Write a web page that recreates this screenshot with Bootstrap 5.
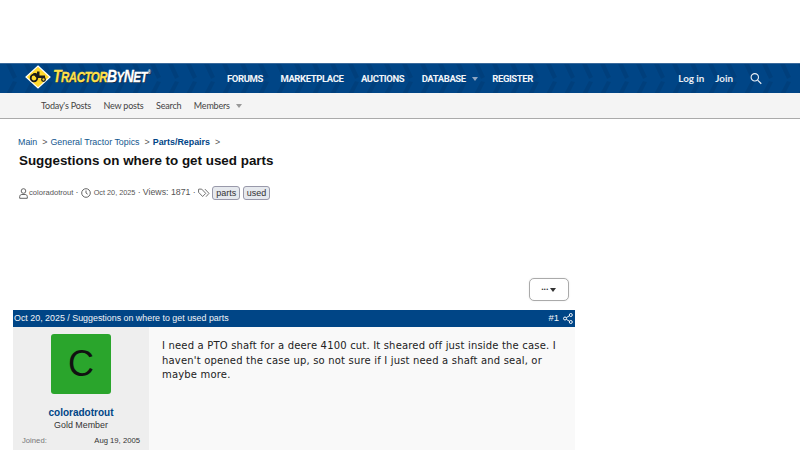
<!DOCTYPE html>
<html lang="en">
<head>
    <meta charset="UTF-8">
    <meta name="viewport" content="width=device-width, initial-scale=1.0">
    <title>Suggestions on where to get used parts</title>
    <link href="https://cdn.jsdelivr.net/npm/bootstrap@5.3.3/dist/css/bootstrap.min.css" rel="stylesheet">
    <script src="https://cdn.jsdelivr.net/npm/bootstrap@5.3.3/dist/js/bootstrap.bundle.min.js"></script>
    <style>
        html, body {
            height: 450px;
            overflow: hidden;
        }
        body {
            background: #fff;
            color: #141414;
            font-family: "Liberation Sans", Arial, sans-serif;
            font-size: 12px;
        }
        .ad-top {
            height: 63px;
        }
        .site-head {
            height: 30px;
            background-color: #004586;
            background-image: url("data:image/svg+xml,%3Csvg xmlns='http://www.w3.org/2000/svg' width='18' height='30'%3E%3Cpath d='M6 0h5l6 13-4 2zM13 17l4 1-6 12H6z' fill='%23003f7c'/%3E%3C/svg%3E");
            border-top: 1px solid #3a6a9c;
        }
        .logo-box {
            margin-left: 25px;
            width: 202px;
            padding-bottom: 4px;
        }
        .logo-text {
            display: inline-block;
            font-weight: 700;
            font-style: italic;
            font-size: 17px;
            letter-spacing: -.6px;
            color: #ffe14a;
            line-height: 1;
            text-shadow: 1px 1px 0 #10253f;
            white-space: nowrap;
            transform: scaleX(.82);
            transform-origin: left center;
            -webkit-text-stroke: .3px currentColor;
        }
        .logo-text small {
            font-size: 14px;
        }
        .logo-text .logo-white {
            color: #fff;
        }
        .logo-text sup {
            font-size: 5px;
            color: #fff;
            top: -1.6em;
            margin-left: 1px;
            -webkit-text-stroke: 0;
        }
        .logo-ico {
            margin-right: 2px;
        }
        .main-link {
            font-family: "Roboto", sans-serif;
            font-weight: 700;
            font-size: 9.5px;
            letter-spacing: -.4px;
            color: #f2f5f9;
            text-decoration: none;
            white-space: nowrap;
        }
        .main-gap {
            gap: 17.5px;
            padding-top: 1px;
        }
        .caret-down {
            display: inline-block;
            width: 0;
            height: 0;
            border-left: 3.5px solid transparent;
            border-right: 3.5px solid transparent;
            border-top: 4px solid #8fa6c2;
        }
        .main-gap .caret-down {
            margin-left: 6px;
            margin-right: -3px;
        }
        .right-link {
            font-family: "Lato", sans-serif;
            font-size: 9.8px;
            font-weight: 700;
            color: #e8eef5;
            text-decoration: none;
        }
        .join-link {
            margin-left: 11px;
        }
        .search-ico {
            margin: 0 38px 0 17px;
        }
        .sub-head {
            height: 26px;
            background: #f4f4f4;
            border-bottom: 1px solid #aaa;
            padding-left: 41px;
            gap: 12.5px;
        }
        .sub-link {
            font-family: "Lato", sans-serif;
            font-size: 9px;
            letter-spacing: -.2px;
            color: #444;
            text-decoration: none;
        }
        .sub-head .caret-down {
            border-top-color: #999;
            margin-left: 6px;
        }
        .crumbs {
            margin: 16px 0 0 18px;
            height: 14px;
            font-size: 8.9px;
            line-height: 14px;
        }
        .crumbs a {
            color: #14588f;
            text-decoration: none;
        }
        .crumbs a.fw-bold {
            color: #004586;
        }
        .crumbs .crumb-sep {
            color: #555;
            margin: 0 3px 0 5px;
        }
        .thread-title {
            margin: 2px 0 0 19px;
            font-size: 13.4px;
            font-weight: 700;
            line-height: 20px;
            color: #111;
        }
        .thread-meta {
            margin: 14px 0 0 19px;
            height: 16px;
            font-size: 8.8px;
            color: #555;
        }
        .meta-tiny {
            font-size: 7.6px;
            margin-left: 1px;
        }
        .meta-date {
            font-size: 7.3px;
            margin-left: 3px;
        }
        .meta-dot {
            margin: 0 2.200px;
        }
        .tag-pill {
            background: #e6e9ee;
            border: 1px solid #99a;
            border-radius: 3px;
            padding: 0 3px;
            font-size: 9px;
            line-height: 12px;
            color: #333;
            margin-left: 2.500px;
        }
        .post-wrap {
            width: 562px;
            margin-left: 13px;
        }
        .tools-row {
            margin-top: 77px;
            height: 32px;
        }
        .tools-btn {
            width: 40px;
            height: 23px;
            border: 1px solid #aaa;
            border-radius: 5px;
            background: #fff;
            padding: 0;
            margin-right: 6px;
            box-shadow: 0 0 2px rgba(0, 0, 0, .1);
        }
        .tools-btn .caret-down {
            border-top-color: #333;
            margin-left: 2px;
        }
        .tools-dots {
            font-size: 5.5px;
            color: #333;
            letter-spacing: .4px;
        }
        .post-bar {
            height: 17px;
            background: #004586;
            color: #f0f4f8;
            font-size: 8.9px;
            padding: 0 1px;
        }
        .post-bar-num {
            font-size: 9.5px;
        }
        .share-ico {
            margin: 0 1px 0 4px;
        }
        .post-body {
            height: 123px;
        }
        .user-cell {
            width: 136px;
            background: #eee;
        }
        .user-pic {
            width: 60px;
            height: 60px;
            margin: 7px auto 0;
            background: #2aa52c;
            border-radius: 3px;
            font-size: 36px;
            line-height: 1;
            color: #111;
        }
        .user-name {
            margin-top: 12px;
            font-size: 10px;
            font-weight: 700;
            line-height: 13px;
            color: #004586;
        }
        .user-role {
            font-size: 8.9px;
            line-height: 13px;
            color: #333;
        }
        .user-stat {
            font-size: 7.7px;
            margin: 3px 9px 0;
            color: #333;
        }
        .user-stat span:first-child {
            color: #777;
        }
        .post-text {
            background: #f9f9f9;
            padding: 12px 13px;
            font-family: "DejaVu Sans", sans-serif;
            font-size: 10px;
            letter-spacing: .18px;
            line-height: 14.5px;
            color: #222;
        }
    </style>
</head>
<body>

<div class="ad-top"></div>

<!-- Main nav -->
<nav class="site-head d-flex align-items-center">
    <div class="logo-box d-flex align-items-center flex-shrink-0">
        <svg width="26" height="24" viewBox="0 0 26 24" class="flex-shrink-0 logo-ico">
            <path d="M13 1l12 11-12 11L1 12z" fill="#ffd92e" stroke="#fff" stroke-width="1.2"/>
            <circle cx="9" cy="13" r="3.300" fill="none" stroke="#1c1c1c" stroke-width="1.800"/>
            <circle cx="18.500" cy="14.500" r="1.800" fill="none" stroke="#1c1c1c" stroke-width="1.300"/>
            <path d="M8 8h3.500l1 2.500H20v2.500h-7.500l-2-1zM12 6.500h2.500V11H12z" fill="#1c1c1c"/>
        </svg>
        <span class="logo-text"><span>T</span><small>RACTOR</small><span class="logo-white">B</span><small class="logo-white">Y</small><span class="logo-white">N</span><small class="logo-white">ET</small><sup>®</sup></span>
    </div>
    <div class="d-flex align-items-center main-gap">
        <a class="main-link" href="#">FORUMS</a>
        <a class="main-link" href="#">MARKETPLACE</a>
        <a class="main-link" href="#">AUCTIONS</a>
        <span class="d-flex align-items-center">
            <a class="main-link" href="#">DATABASE</a>
            <span class="caret-down"></span>
        </span>
        <a class="main-link" href="#">REGISTER</a>
    </div>
    <div class="d-flex align-items-center ms-auto">
        <a class="right-link" href="#">Log in</a>
        <a class="right-link join-link" href="#">Join</a>
        <svg width="12" height="13" viewBox="0 0 13 13" class="search-ico">
            <circle cx="5.200" cy="5.200" r="4" fill="none" stroke="#e8eef5" stroke-width="1.200"/>
            <path d="M8.200 8.200l4 4" stroke="#e8eef5" stroke-width="1.300"/>
        </svg>
    </div>
</nav>

<!-- Sub nav -->
<div class="sub-head d-flex align-items-center">
    <a class="sub-link" href="#">Today's Posts</a>
    <a class="sub-link" href="#">New posts</a>
    <a class="sub-link" href="#">Search</a>
    <span class="d-flex align-items-center">
        <a class="sub-link" href="#">Members</a>
        <span class="caret-down"></span>
    </span>
</div>

<!-- Breadcrumb and title -->
<div class="crumbs">
    <a href="#">Main</a><span class="crumb-sep">&gt;</span><a href="#">General Tractor Topics</a><span class="crumb-sep">&gt;</span><a href="#" class="fw-bold">Parts/Repairs</a><span class="crumb-sep">&gt;</span>
</div>
<h1 class="thread-title">Suggestions on where to get used parts</h1>

<div class="thread-meta d-flex align-items-center">
    <svg width="9" height="11" viewBox="0 0 9 11">
        <circle cx="4.500" cy="3" r="2.300" fill="none" stroke="#555" stroke-width=".9"/>
        <path d="M.7 10.300V8.600c0-1.300 1-2.100 2.100-2.100h3.400c1.100 0 2.100.8 2.100 2.100v1.700z" fill="none" stroke="#555" stroke-width=".9"/>
    </svg>
    <span class="meta-tiny">coloradotrout</span>
    <span class="meta-dot">·</span>
    <svg width="10" height="10" viewBox="0 0 10 10">
        <circle cx="5" cy="5" r="4.300" fill="none" stroke="#555" stroke-width=".9"/>
        <path d="M5 2.500V5l1.700 1.200" fill="none" stroke="#555" stroke-width=".9"/>
    </svg>
    <span class="meta-date">Oct 20, 2025</span>
    <span class="meta-dot">·</span>
    <span>Views: 1871</span>
    <span class="meta-dot">·</span>
    <svg width="12" height="10" viewBox="0 0 13 10">
        <path d="M.6 1v3.200L5 8.800 8.400 5.400 4 .8H1z" fill="none" stroke="#555" stroke-width=".9"/>
        <path d="M7.500.8l4.400 4.600-3.200 3.600" fill="none" stroke="#555" stroke-width=".9"/>
    </svg>
    <span class="tag-pill">parts</span>
    <span class="tag-pill">used</span>
</div>

<!-- Post -->
<div class="post-wrap">
    <div class="tools-row d-flex justify-content-end align-items-start">
        <button class="tools-btn d-flex align-items-center justify-content-center" type="button">
            <span class="tools-dots">•••</span><span class="caret-down"></span>
        </button>
    </div>
    <div class="post-bar d-flex align-items-center justify-content-between">
        <span>Oct 20, 2025 / Suggestions on where to get used parts</span>
        <span class="d-flex align-items-center">
            <span class="post-bar-num">#1</span>
            <svg width="10" height="11" viewBox="0 0 10 11" class="share-ico">
                <circle cx="7.800" cy="2" r="1.500" fill="none" stroke="#f0f4f8"/>
                <circle cx="2" cy="5.500" r="1.500" fill="none" stroke="#f0f4f8"/>
                <circle cx="7.800" cy="9" r="1.500" fill="none" stroke="#f0f4f8"/>
                <path d="M3.300 4.700l3.200-2M3.300 6.300l3.200 2" stroke="#f0f4f8"/>
            </svg>
        </span>
    </div>
    <div class="post-body d-flex">
        <div class="user-cell flex-shrink-0 text-center">
            <div class="user-pic d-flex align-items-center justify-content-center">C</div>
            <div class="user-name">coloradotrout</div>
            <div class="user-role">Gold Member</div>
            <div class="user-stat d-flex justify-content-between">
                <span>Joined:</span><span>Aug 19, 2005</span>
            </div>
        </div>
        <div class="post-text flex-grow-1">
            I need a PTO shaft for a deere 4100 cut. It sheared off just inside the case. I haven't opened the case up, so not sure if I just need a shaft and seal, or maybe more.
        </div>
    </div>
</div>

</body>
</html>
